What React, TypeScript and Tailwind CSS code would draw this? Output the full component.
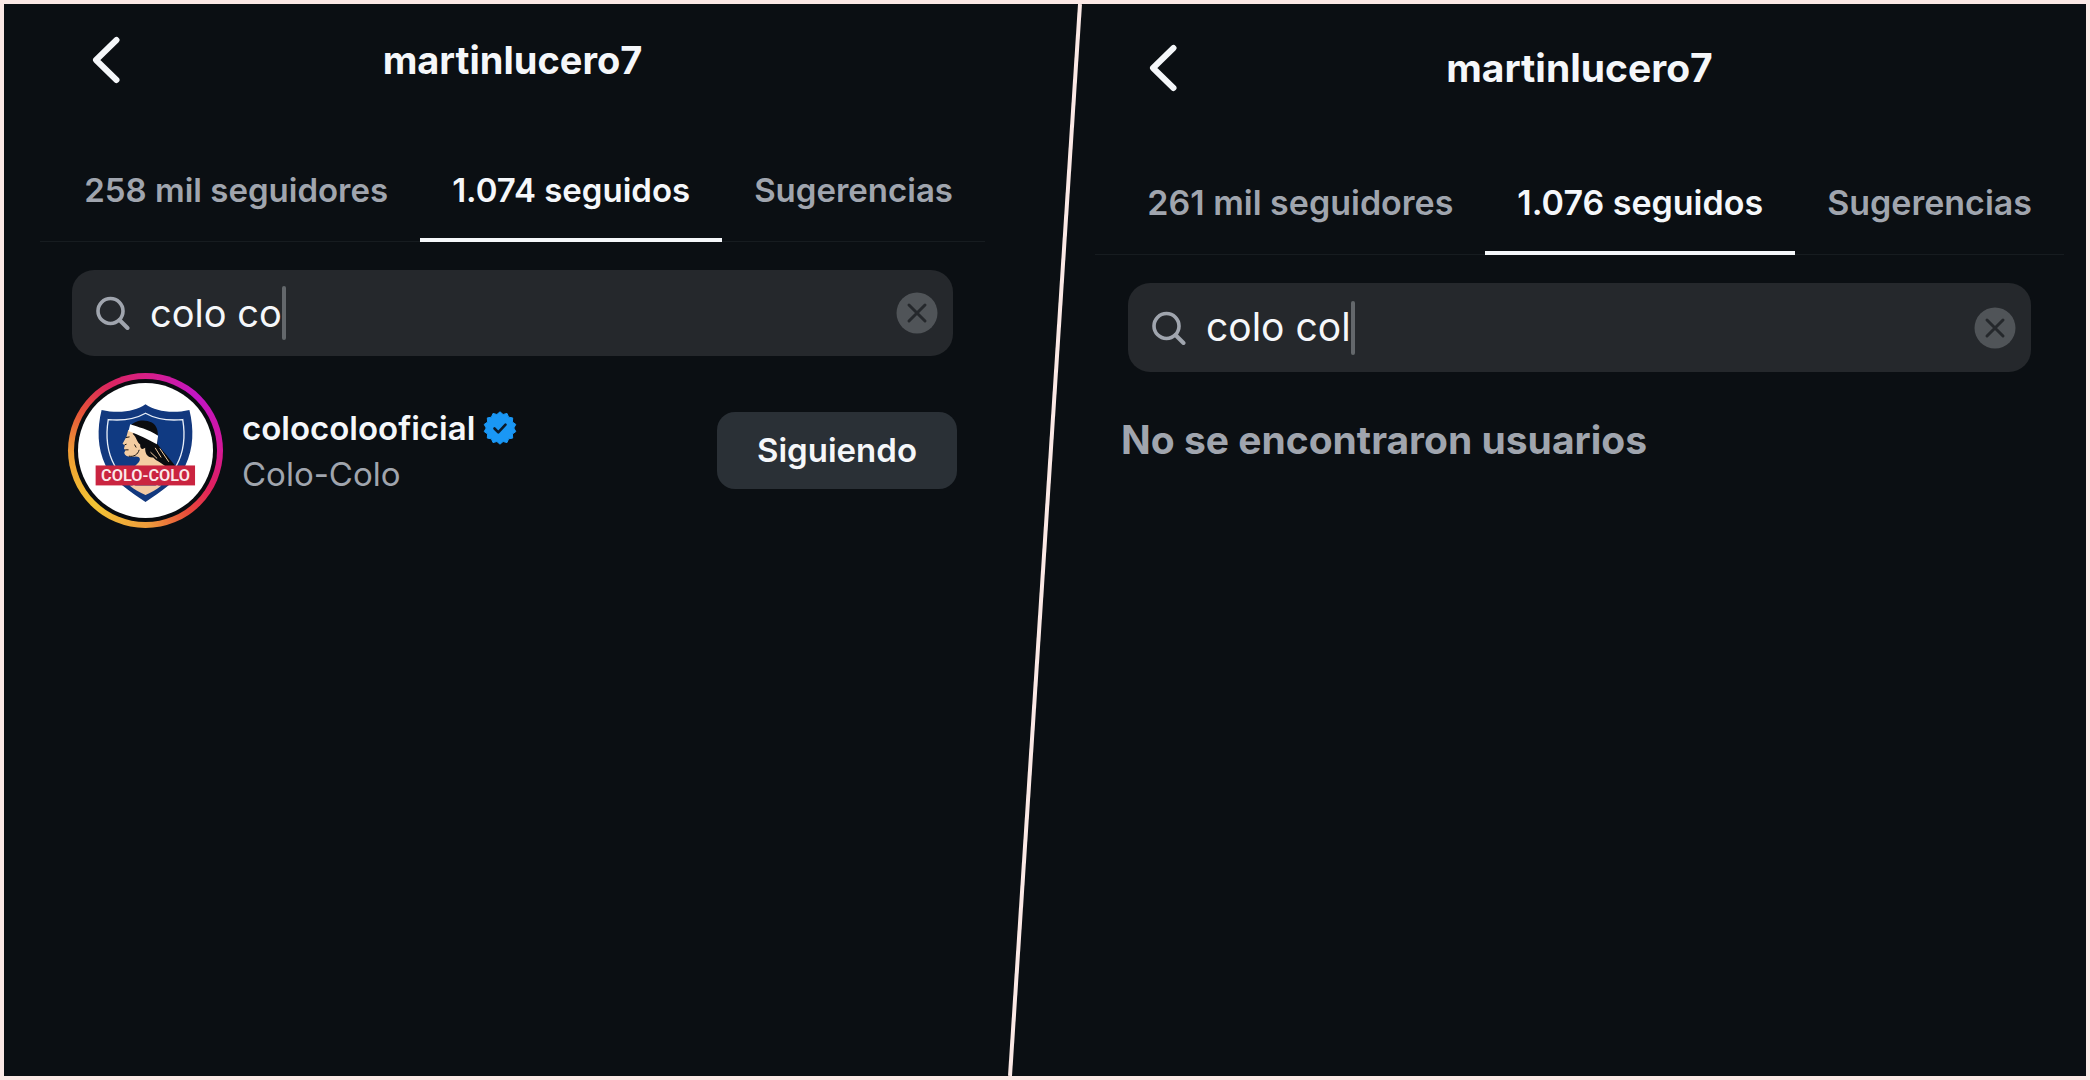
import React, { useState } from 'react';

const BackIcon = () => (
  <svg viewBox="0 0 28 48" className="w-7 h-12" fill="none" stroke="currentColor">
    <path d="M24.500 4 4 24l20.500 20" strokeWidth="6" strokeLinecap="round" strokeLinejoin="round" />
  </svg>
);

const SearchIcon = () => (
  <svg viewBox="0 0 34 34" className="w-[34px] h-[34px] flex-none" fill="none" stroke="currentColor">
    <circle cx="14.500" cy="15" r="12.500" strokeWidth="3.600" />
    <path d="m23.500 24 8 8" strokeWidth="4" strokeLinecap="round" />
  </svg>
);

const ClearIcon = () => (
  <svg viewBox="0 0 42 42" className="w-[42px] h-[42px]">
    <circle cx="21" cy="21" r="20.500" fill="#505458" />
    <path d="m13 13 16 16M29 13 13 29" stroke="#25282c" strokeWidth="3" strokeLinecap="round" />
  </svg>
);

const badgePoints = Array.from({ length: 28 }, (_, i) => {
  const angle = (i * Math.PI) / 14;
  const radius = i % 2 ? 13.8 : 16.2;
  return `${(17 + radius * Math.sin(angle)).toFixed(1)},${(17 - radius * Math.cos(angle)).toFixed(1)}`;
}).join(' ');

const VerifiedIcon = () => (
  <svg viewBox="0 0 34 34" className="w-[34px] h-[34px] flex-none" role="img" aria-label="Verificado">
    <polygon points={badgePoints} fill="#1a97f5" stroke="#1a97f5" strokeLinejoin="round" />
    <path d="m11.500 17.500 3.800 3.800 7.200-7.600" fill="none" stroke="#0b1a2b" strokeWidth="2.600" strokeLinecap="round" strokeLinejoin="round" />
  </svg>
);

const Crest = () => (
  <svg viewBox="52 67 406 406" className="w-full h-full">
    <path
      d="M255 131C285 152 335 160 387 148C401 205 400 262 375 315C352 362 302 392 255 425C208 392 158 362 135 315C110 262 109 205 123 148C175 160 225 152 255 131Z"
      fill="#12387e"
    />
    <path
      d="M255 158C285 175 325 181 367 177C375 225 370 275 348 315C328 350 290 376 255 400C220 376 182 350 162 315C140 275 135 225 143 177C185 181 225 175 255 158Z"
      fill="#103a82"
      stroke="#e8eef8"
      strokeWidth="4"
    />
    <path d="M207 375H303C290 386 272 396 255 404C238 396 220 386 207 375Z" fill="#f2c9a4" />
    {/* face and neck */}
    <path
      d="M203 208L198 228L186 250L193 255L190 264L195 269L191 277C194 290 208 290 226 288C240 288 241 298 234 306L222 318H318L282 275L268 218Z"
      fill="#f3cda2"
    />
    <path d="M196 231 207 229M194 268H204M192 253 198 251M222 252 227 261M205 287C220 290 232 282 236 268" fill="none" stroke="#17120f" strokeWidth="3" />
    {/* hair */}
    <path
      d="M209 196C222 180 252 174 274 186C290 196 293 212 292 228L290 250C302 266 324 290 346 318H316C302 306 288 302 278 291C262 293 253 280 254 262C246 268 238 266 239 252C229 247 230 232 216 220L229 212Z"
      fill="#0b0c0f"
    />
    <path d="M284 262 302 291M298 264 325 304M270 275 290 294" stroke="#f3cda2" strokeWidth="3" />
    <path d="M209 191C232 200 264 205 293 226L289 251C264 236 234 223 204 211Z" fill="#ffffff" />
    <rect x="105" y="315" width="299" height="60" fill="#ca2440" />
    <text x="255" y="363" textAnchor="middle" fontSize="49" className="font-['Roboto'] font-semibold" fill="#fbe9ea">
      COLO-COLO
    </text>
  </svg>
);

const Avatar = () => (
  <div className="w-[155px] h-[155px] p-[6px] rounded-full flex-none bg-[conic-gradient(#d81f86,#c215c6_12%,#d4179b_24%,#e0205f_33%,#e8483a_40%,#ee9a3c_49%,#f3c534_62%,#f0a033_74%,#e6503a_84%,#da2560_92%,#d81f86)]">
    <div className="w-full h-full p-1 rounded-full bg-[#090c10]">
      <div className="w-full h-full rounded-full bg-white overflow-hidden">
        <Crest />
      </div>
    </div>
  </div>
);

type TabsProps = { labels: string[]; className: string };

const Tabs = ({ labels, className }: TabsProps) => (
  <nav className={`flex flex-row justify-end border-b border-[#171c20] font-semibold ${className}`}>
    {labels.map((label, i) => (
      <button
        key={label}
        type="button"
        className={
          i === 1
            ? 'px-8 pb-[26px] -mb-px border-b-4 border-[#f5f7fa] text-[#f5f7fa] whitespace-nowrap'
            : 'px-8 pb-[26px] -mb-px border-b-4 border-transparent text-[#a0a5ae] whitespace-nowrap'
        }
      >
        {label}
      </button>
    ))}
  </nav>
);

type SearchProps = { initial: string; className: string };

const SearchBox = ({ initial, className }: SearchProps) => {
  const [query, setQuery] = useState(initial);
  return (
    <div className={`flex flex-row items-center rounded-[22px] bg-[#25282c] pl-6 pr-[15px] ${className}`}>
      <span className="text-[#a0a5ae]">
        <SearchIcon />
      </span>
      <input
        type="text"
        aria-label="Buscar"
        value={query}
        onChange={(e) => setQuery(e.target.value)}
        className="field-sizing-content ml-5 bg-transparent outline-none text-[#f5f7fa]"
      />
      <span className="w-1 h-[54px] rounded-full bg-[#63676b]" />
      <button type="button" aria-label="Borrar" className="ml-auto flex-none" onClick={() => setQuery('')}>
        <ClearIcon />
      </button>
    </div>
  );
};

const FollowedPanel = () => (
  <section className="min-w-0 pl-9 pr-[60px] pt-8">
    <header className="grid grid-cols-3 items-center px-[52px]">
      <button type="button" aria-label="Volver" className="w-7">
        <BackIcon />
      </button>
      <h1 className="text-center text-[38px] leading-12 font-bold">martinlucero7</h1>
    </header>
    <Tabs labels={['258 mil seguidores', '1.074 seguidos', 'Sugerencias']} className="mt-[84px] text-[33px] leading-[44px]" />
    <SearchBox initial="colo co" className="mt-7 mx-8 h-[86px] text-[38px]" />
    <div className="flex flex-row items-center mt-[17px] mx-7">
      <Avatar />
      <div className="ml-[19px] flex-auto">
        <div className="flex flex-row items-center gap-2">
          <a href="#colocolooficial" className="text-[33px] leading-[46px] font-semibold">
            colocolooficial
          </a>
          <VerifiedIcon />
        </div>
        <p className="text-[33px] leading-[46px] text-[#a0a5ae]">Colo-Colo</p>
      </div>
      <button type="button" className="h-[77px] px-10 rounded-[18px] bg-[#2a3036] text-[33px] font-semibold">
        Siguiendo
      </button>
    </div>
  </section>
);

const EmptyPanel = () => (
  <section className="min-w-0 pl-[50px] pr-[22px] pt-10">
    <header className="grid grid-cols-3 items-center px-[54px]">
      <button type="button" aria-label="Volver" className="w-7">
        <BackIcon />
      </button>
      <h1 className="text-center text-[39px] leading-12 font-bold">martinlucero7</h1>
    </header>
    <Tabs labels={['261 mil seguidores', '1.076 seguidos', 'Sugerencias']} className="mt-[89px] text-[34px] leading-[44px]" />
    <SearchBox initial="colo col" className="mt-7 mx-[33px] h-[89px] text-[39px]" />
    <p className="mt-11 ml-[26px] text-[39px] leading-12 font-bold text-[#a0a5ae]">No se encontraron usuarios</p>
  </section>
);

const App = () => {
  return (
    <main className="relative grid grid-cols-2 min-h-screen border-4 border-[#fbe8e5] bg-[#0b0f13] font-['Inter','Liberation_Sans',sans-serif] text-[#f5f7fa]">
      <FollowedPanel />
      <EmptyPanel />
      {/* slanted cut between the two captures */}
      <svg viewBox="0 0 2082 1072" preserveAspectRatio="none" className="absolute inset-0 w-full h-full pointer-events-none">
        <path d="M1076 0 1006 1072" stroke="#fbe8e5" strokeWidth="4" />
      </svg>
    </main>
  );
};

export default App;
